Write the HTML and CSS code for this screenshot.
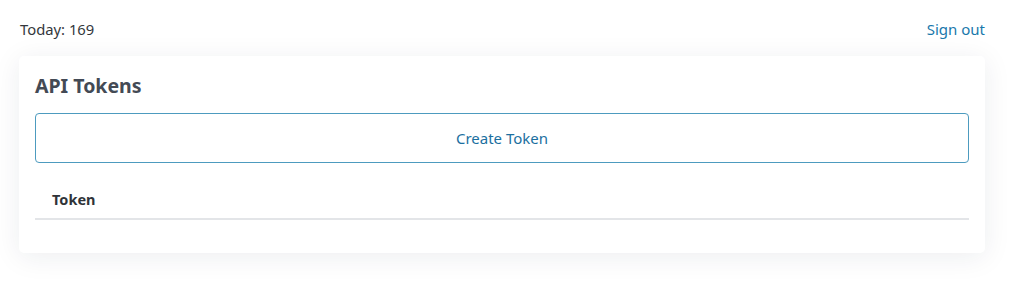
FILE: index.html
```html
<!DOCTYPE html>
<html>
<head>
<meta charset="utf-8">
<link rel="stylesheet" href="styles.css">
</head>
<body>
<div class="page">
  <header class="topbar">
    <span class="today">Today: 169</span>
    <a class="signout" href="#">Sign out</a>
  </header>
  <section class="card">
    <h1 class="title">API Tokens</h1>
    <button class="create">Create Token</button>
    <table class="tokens">
      <thead><tr><th>Token</th></tr></thead>
      <tbody></tbody>
    </table>
  </section>
</div>
</body>
</html>
```
FILE: styles.css
```css
* { box-sizing: border-box; }
html, body { margin: 0; padding: 0; background: #fff; }
body {
  font-family: "Noto Sans", "Open Sans", sans-serif;
  color: #2b2f33;
}
.page {
  padding: 18px 39px 44px 19px;
}
.topbar {
  display: flex;
  justify-content: space-between;
  align-items: center;
  height: 22px;
  padding-left: 1px;
  font-size: 14.8px;
}
.today { color: #33373c; }
.signout { color: #1a78ab; text-decoration: none; font-size: 15px; }
.card {
  margin-top: 16px;
  background: #fff;
  border-radius: 5px;
  box-shadow: 0 4px 28px rgba(30, 40, 70, 0.08);
  padding: 16px 16px 33px 16px;
}
.title {
  margin: 0;
  font-size: 19.5px;
  font-weight: 700;
  color: #434a55;
  line-height: 28px;
}
.create {
  display: block;
  width: 100%;
  margin-top: 13px;
  height: 50px;
  background: #fff;
  border: 1px solid #4d9bbf;
  border-radius: 4px;
  color: #1b6fa0;
  font-family: inherit;
  font-size: 15px;
}
.tokens {
  width: 100%;
  border-collapse: collapse;
  margin-top: 16px;
}
.tokens th {
  text-align: left;
  font-size: 14.5px;
  font-weight: 700;
  color: #2f3338;
  padding: 10px 17px 9px;
  border-bottom: 2px solid #e3e5e8;
}
```
